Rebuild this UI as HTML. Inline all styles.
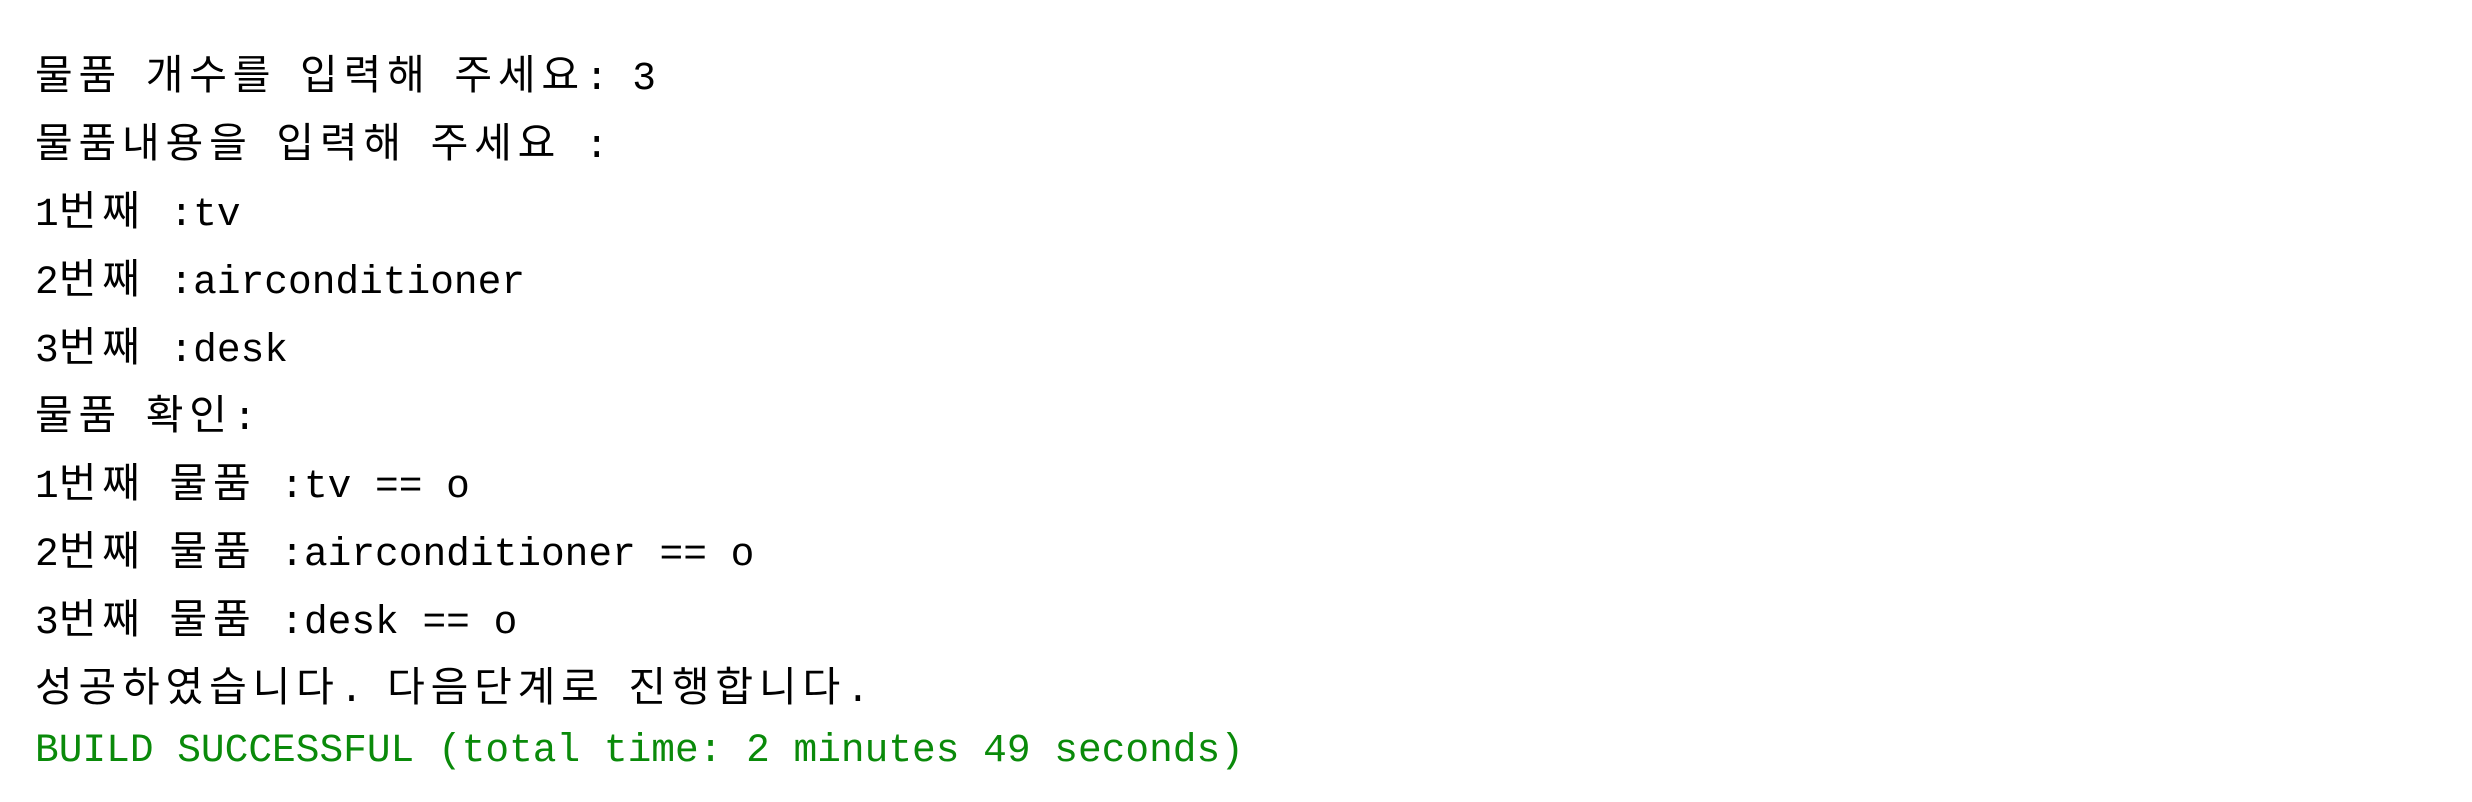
<!DOCTYPE html>
<html><head><meta charset="utf-8"><style>
html,body{margin:0;padding:0;background:#fff;}
body{width:2472px;height:802px;overflow:hidden;}
.c{position:absolute;left:35px;top:37px;}
.l{height:68px;line-height:68px;white-space:pre;font-family:"Liberation Mono",monospace;font-size:39.5px;color:#000;}
.k{font-family:"Noto Sans CJK KR","NanumGothic",sans-serif;font-size:41px;letter-spacing:5.8px;}
.g{color:#0a8a0a;}
</style></head><body><div class="c">
<div class="l"><span class="k">물품</span> <span class="k">개수를</span> <span class="k">입력해</span> <span class="k">주세요</span>: 3</div>
<div class="l"><span class="k">물품내용을</span> <span class="k">입력해</span> <span class="k">주세요</span> :</div>
<div class="l">1<span class="k">번째</span> :tv</div>
<div class="l">2<span class="k">번째</span> :airconditioner</div>
<div class="l">3<span class="k">번째</span> :desk</div>
<div class="l"><span class="k">물품</span> <span class="k">확인</span>:</div>
<div class="l">1<span class="k">번째</span> <span class="k">물품</span> :tv == o</div>
<div class="l">2<span class="k">번째</span> <span class="k">물품</span> :airconditioner == o</div>
<div class="l">3<span class="k">번째</span> <span class="k">물품</span> :desk == o</div>
<div class="l"><span class="k">성공하였습니다</span>. <span class="k">다음단계로</span> <span class="k">진행합니다</span>.</div>
<div class="l g">BUILD SUCCESSFUL (total time: 2 minutes 49 seconds)</div>
</div></body></html>
